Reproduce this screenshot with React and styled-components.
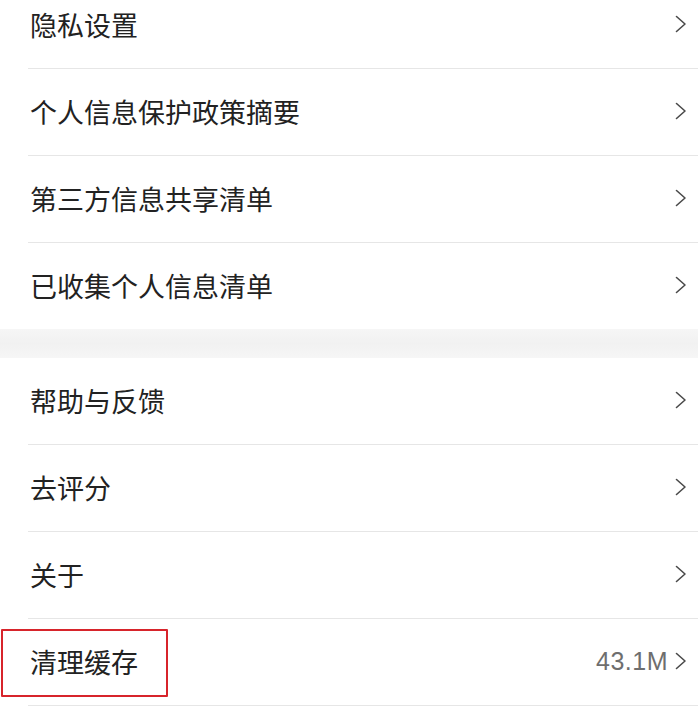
import styled, {createGlobalStyle} from "styled-components";

const GlobalStyle = createGlobalStyle`
    html, body {
        margin: 0;
        padding: 0;
        background: #ffffff;
        overflow: hidden;
    }

    body {
        font-family: "Noto Sans CJK SC", "Noto Sans", sans-serif;
        color: #1c1c1c;
    }
`;

const Page = styled.div`
    display: flex;
    flex-direction: column;
    margin-top: -18px;
`;

const Group = styled.div`
    display: flex;
    flex-direction: column;
    background: #ffffff;
`;

const Gap = styled.div`
    height: 29px;
    background: linear-gradient(#f6f6f6, #f1f1f1 50%, #f6f6f6);
`;

const Row = styled.div`
    display: flex;
    align-items: center;
    justify-content: space-between;
    height: 86px;
    margin-left: 28px;
    padding: 0 11px 2px 2px;
    box-sizing: border-box;
    height: ${({$noLine}) => ($noLine ? "86px" : "87px")};
    border-bottom: ${({$noLine}) => ($noLine ? "none" : "1px solid #e6e6e6")};
`;

const Label = styled.span`
    position: relative;
    font-size: 27px;
    line-height: 1;
    color: #222222;

    ${({$highlight}) => $highlight && `
        &::before {
            content: "";
            position: absolute;
            left: -29px;
            right: -30px;
            top: -19px;
            bottom: -22px;
            border: 2px solid #d7242b;
            border-radius: 1px;
        }
    `}
`;

const Trailing = styled.div`
    display: flex;
    align-items: center;
    gap: 7px;
`;

const Value = styled.span`
    font-family: "Liberation Sans", Arial, sans-serif;
    font-size: 25px;
    color: #6e6e6e;
    letter-spacing: 0.5px;
`;

const Chevron = () => (
    <svg width="12" height="18" viewBox="0 0 12 18" fill="none">
        <path d="M1.5 1.5L10 9L1.5 16.5" stroke="#4a4a4a" strokeWidth="1.6" strokeLinecap="round"
              strokeLinejoin="round"/>
    </svg>
);

const privacyItems = ["隐私设置", "个人信息保护政策摘要", "第三方信息共享清单", "已收集个人信息清单"];

const otherItems = [
    {label: "帮助与反馈"},
    {label: "去评分"},
    {label: "关于"},
    {label: "清理缓存", value: "43.1M", highlight: true},
];

function App() {
    return (
        <>
            <GlobalStyle/>
            <Page>
                <Group>
                    {privacyItems.map((label, i) => (
                        <Row key={label} $noLine={i === privacyItems.length - 1}>
                            <Label>{label}</Label>
                            <Chevron/>
                        </Row>
                    ))}
                </Group>
                <Gap/>
                <Group>
                    {otherItems.map(item => (
                        <Row key={item.label}>
                            <Label $highlight={item.highlight}>{item.label}</Label>
                            <Trailing>
                                {item.value && <Value>{item.value}</Value>}
                                <Chevron/>
                            </Trailing>
                        </Row>
                    ))}
                </Group>
            </Page>
        </>
    );
}

export default App;
